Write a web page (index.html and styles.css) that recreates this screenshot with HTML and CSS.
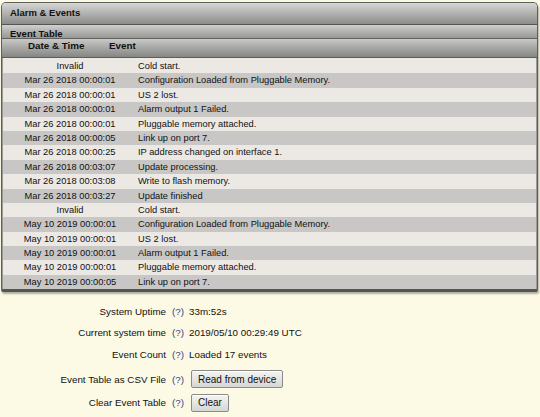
FILE: index.html
```html
<!DOCTYPE html>
<html>
<head>
<meta charset="utf-8">
<link rel="stylesheet" href="styles.css">
</head>
<body>
<div class="panel">
  <div class="title">Alarm &amp; Events</div>
  <div class="subtitle">Event Table</div>
  <div class="thead"><span class="th-date">Date &amp; Time</span><span class="th-event">Event</span></div>
  <div class="tbody">
    <div class="row"><span class="date">Invalid</span><span class="event">Cold start.</span></div>
    <div class="row"><span class="date">Mar 26 2018 00:00:01</span><span class="event">Configuration Loaded from Pluggable Memory.</span></div>
    <div class="row"><span class="date">Mar 26 2018 00:00:01</span><span class="event">US 2 lost.</span></div>
    <div class="row"><span class="date">Mar 26 2018 00:00:01</span><span class="event">Alarm output 1 Failed.</span></div>
    <div class="row"><span class="date">Mar 26 2018 00:00:01</span><span class="event">Pluggable memory attached.</span></div>
    <div class="row"><span class="date">Mar 26 2018 00:00:05</span><span class="event">Link up on port 7.</span></div>
    <div class="row"><span class="date">Mar 26 2018 00:00:25</span><span class="event">IP address changed on interface 1.</span></div>
    <div class="row"><span class="date">Mar 26 2018 00:03:07</span><span class="event">Update processing.</span></div>
    <div class="row"><span class="date">Mar 26 2018 00:03:08</span><span class="event">Write to flash memory.</span></div>
    <div class="row"><span class="date">Mar 26 2018 00:03:27</span><span class="event">Update finished</span></div>
    <div class="row"><span class="date">Invalid</span><span class="event">Cold start.</span></div>
    <div class="row"><span class="date">May 10 2019 00:00:01</span><span class="event">Configuration Loaded from Pluggable Memory.</span></div>
    <div class="row"><span class="date">May 10 2019 00:00:01</span><span class="event">US 2 lost.</span></div>
    <div class="row"><span class="date">May 10 2019 00:00:01</span><span class="event">Alarm output 1 Failed.</span></div>
    <div class="row"><span class="date">May 10 2019 00:00:01</span><span class="event">Pluggable memory attached.</span></div>
    <div class="row"><span class="date">May 10 2019 00:00:05</span><span class="event">Link up on port 7.</span></div>
  </div>
</div>
<div class="form">
  <span class="label">System Uptime</span><span class="help">(?)</span><span class="value">33m:52s</span>
  <span class="label">Current system time</span><span class="help">(?)</span><span class="value">2019/05/10 00:29:49 UTC</span>
  <span class="label">Event Count</span><span class="help">(?)</span><span class="value">Loaded 17 events</span>
  <span class="label">Event Table as CSV File</span><span class="help">(?)</span><span class="value"><button class="btn">Read from device</button></span>
  <span class="label">Clear Event Table</span><span class="help">(?)</span><span class="value"><button class="btn">Clear</button></span>
</div>
</body>
</html>
```
FILE: styles.css
```css
html, body {
  margin: 0;
  padding: 0;
  background: #fcf9e4;
  font-family: "Liberation Sans", Arial, sans-serif;
  font-size: 9.5px;
  color: #111;
}
.panel {
  margin: 2px 2px 0 1px;
  border: 1px solid #5e5e5a;
  border-bottom: 3px solid #555551;
  border-radius: 5px 5px 2px 2px;
  overflow: hidden;
  background: #ece8e4;
  box-shadow: 1px 2px 2px rgba(0,0,0,0.3);
}
.title {
  height: 21px;
  line-height: 20px;
  padding-left: 8px;
  font-weight: bold;
  background: linear-gradient(#d6d6d4, #adadab 55%, #8c8c8a);
  border-bottom: 1px solid #555553;
}
.subtitle {
  height: 13px;
  line-height: 17px;
  padding-left: 8px;
  font-weight: bold;
  background: linear-gradient(#d0d0ce, #acacaa 60%, #989896);
  border-bottom: 1px solid #626260;
}
.thead {
  height: 18px;
  display: grid;
  grid-template-columns: 107px 1fr;
  font-weight: bold;
  font-size: 9.8px;
  line-height: 14px;
  background: linear-gradient(#c8c8c6, #a6a6a4 50%, #868684);
  border-bottom: 1px solid #5e5e5c;
}
.th-date { padding-left: 26px; }
.tbody {
  padding-top: 1px;
  border-left: 1px solid #9a9a98;
  border-right: 1px solid #9a9a98;
  font-size: 9.3px;
}
.row {
  display: grid;
  grid-template-columns: 134px 1fr;
  height: 14.4px;
  line-height: 14.4px;
  background: #ece8e4;
}
.row:nth-child(even) {
  background: #c8c7c6;
}
.date { text-align: center; }
.event { padding-left: 1px; }
.form {
  display: grid;
  grid-template-columns: 166px 22px 1fr;
  grid-template-rows: 22px 21px 23px 26px 21px;
  align-items: center;
  margin-top: 8px;
  font-size: 9.8px;
}
.label { text-align: right; }
.help {
  color: #33408a;
  padding-left: 6px;
}
.value { padding-left: 1px; }
.btn {
  font-family: "Liberation Sans", Arial, sans-serif;
  font-size: 10px;
  color: #111;
  height: 18px;
  margin-left: 2px;
  padding: 0 6px;
  border: 1px solid #8a8a88;
  border-radius: 2px;
  background: linear-gradient(#f4f4f2, #d6d6d4);
  box-shadow: 0 1px 0 #fff inset;
}
```
